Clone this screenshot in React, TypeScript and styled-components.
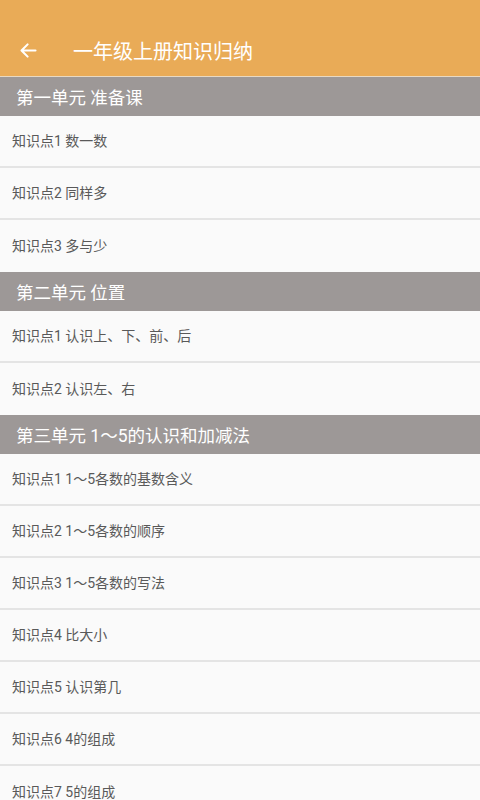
import React from "react";
import styled, { createGlobalStyle } from "styled-components";

const GlobalStyle = createGlobalStyle`
  html, body {
    margin: 0;
    padding: 0;
    background: #fafafa;
    font-family: Roboto, "Noto Sans CJK SC", sans-serif;
  }
`;

const Page = styled.div`
  width: 480px;
  height: 800px;
  overflow: hidden;
  background: #fafafa;
`;

const Header = styled.header`
  height: 77px;
  padding-top: 25px;
  box-sizing: border-box;
  background: #e9ab57;
  border-bottom: 1px solid #e9d9c2;
  display: flex;
  align-items: center;
  color: #ffffff;
`;

const BackButton = styled.div`
  width: 56px;
  height: 100%;
  display: flex;
  align-items: center;
  padding-left: 18px;
  box-sizing: border-box;
`;

const Title = styled.h1`
  margin: 0 0 0 17px;
  font-size: 20px;
  font-weight: 400;
`;

const SectionHeader = styled.div`
  height: 39px;
  background: #9d9897;
  color: #ffffff;
  font-size: 17.5px;
  display: flex;
  align-items: center;
  padding-left: 16px;
`;

const Row = styled.div<{ $last?: boolean }>`
  height: 52px;
  box-sizing: border-box;
  border-bottom: ${({ $last }) => ($last ? "none" : "2px solid #e4e4e4")};
  display: flex;
  align-items: center;
  padding: 0 0 2px 12px;
  font-size: 14px;
  color: #595959;
`;

type Unit = { title: string; items: string[] };

const units: Unit[] = [
  {
    title: "第一单元 准备课",
    items: ["知识点1 数一数", "知识点2 同样多", "知识点3 多与少"],
  },
  {
    title: "第二单元 位置",
    items: ["知识点1 认识上、下、前、后", "知识点2 认识左、右"],
  },
  {
    title: "第三单元 1～5的认识和加减法",
    items: [
      "知识点1 1～5各数的基数含义",
      "知识点2 1～5各数的顺序",
      "知识点3 1～5各数的写法",
      "知识点4 比大小",
      "知识点5 认识第几",
      "知识点6 4的组成",
      "知识点7 5的组成",
    ],
  },
];

const BackArrow = () => (
  <svg width="21" height="21" viewBox="0 0 24 24" fill="none">
    <path
      d="M20 12H5M11 5l-7 7 7 7"
      stroke="#ffffff"
      strokeWidth="2.4"
      strokeLinecap="round"
      strokeLinejoin="round"
    />
  </svg>
);

export default function App() {
  return (
    <Page>
      <GlobalStyle />
      <Header>
        <BackButton>
          <BackArrow />
        </BackButton>
        <Title>一年级上册知识归纳</Title>
      </Header>
      {units.map((unit) => (
        <section key={unit.title}>
          <SectionHeader>{unit.title}</SectionHeader>
          {unit.items.map((item, i) => (
            <Row key={item} $last={i === unit.items.length - 1}>
              {item}
            </Row>
          ))}
        </section>
      ))}
    </Page>
  );
}
